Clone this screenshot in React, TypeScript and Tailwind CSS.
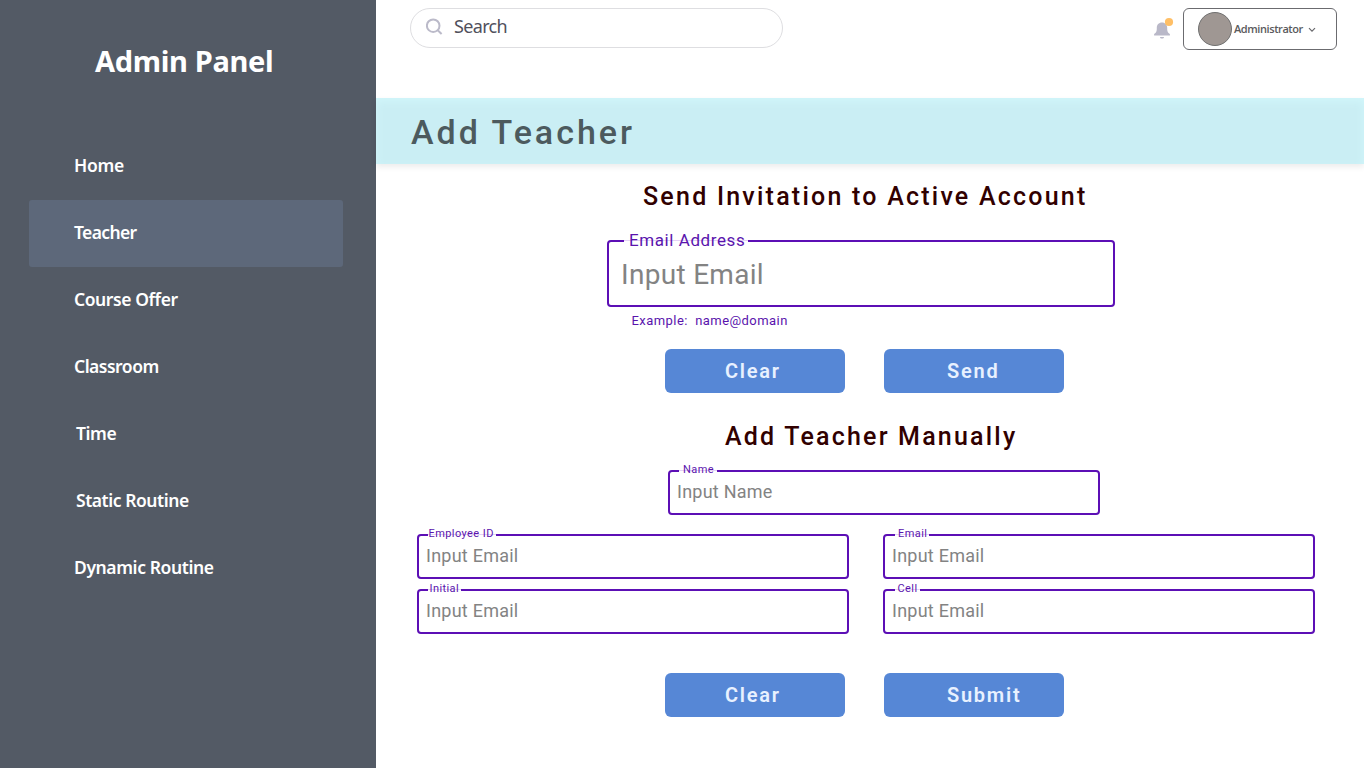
import React from "react";

const navItems = [
  { label: "Home", pad: "pl-[45px]", spacing: "tracking-[-0.3px]" },
  { label: "Teacher", pad: "pl-[45px]", spacing: "tracking-[-0.65px]", active: true },
  { label: "Course Offer", pad: "pl-[45px]", spacing: "tracking-[-0.42px]" },
  { label: "Classroom", pad: "pl-[45px]", spacing: "tracking-[-0.5px]" },
  { label: "Time", pad: "pl-[47px]", spacing: "tracking-[-0.4px]" },
  { label: "Static Routine", pad: "pl-[47px]", spacing: "tracking-[-0.45px]" },
  { label: "Dynamic Routine", pad: "pl-[45px]", spacing: "tracking-[-0.4px]" },
];

function Sidebar() {
  return (
    <aside className="w-[376px] shrink-0 bg-[#535a65] px-[29px] text-white font-['Noto_Sans',sans-serif]">
      <h1 className="flex h-[133px] items-start pl-[66px] pt-[41px] text-[29px] leading-[40px] font-bold tracking-[-0.32px] whitespace-nowrap">
        Admin Panel
      </h1>
      <nav className="flex w-[314px] flex-col">
        {navItems.map((item) => (
          <a
            key={item.label}
            className={`flex h-[67px] items-center rounded-[3px] pb-[3px] text-[17.5px] font-semibold ${item.pad} ${item.spacing} ${item.active ? "bg-[#5d687a]" : ""}`}
          >
            {item.label}
          </a>
        ))}
      </nav>
    </aside>
  );
}

function TopBar() {
  return (
    <header className="flex h-[98px] items-start pt-2 pl-[34px] pr-[27px]">
      <div className="flex h-10 w-[373px] items-center rounded-full border border-[#dedee1] pl-[15px]">
        <svg width="17" height="17" viewBox="0 0 17 17" fill="none" stroke="#bbbac9" strokeWidth="2" className="-mt-[3px]">
          <circle cx="7.2" cy="7.7" r="6.3" />
          <path d="M11.7 12.2 15.6 16" />
        </svg>
        <span className="-mt-[3px] ml-[11px] text-[18px] tracking-[-0.65px] text-[#50505c] font-['Noto_Sans',sans-serif]">Search</span>
      </div>
      <svg width="22" height="24" viewBox="0 0 22 24" className="mt-[8px] ml-auto mr-[8px]">
        <path d="M9 6.6c3.3 0 5.2 2.4 5.2 5.3 0 3.6.5 4.6 2.7 6.2v1.5H1.1v-1.5c2.2-1.6 2.7-2.6 2.7-6.200C3.8 9 5.7 6.600 9 6.600z" fill="#b9b8c8" />
        <path d="M7 21h4c0 .9-.9 1.600-2 1.600s-2-.7-2-1.600z" fill="#b9b8c8" />
        <circle cx="16" cy="6" r="4.1" fill="#ffbf66" />
      </svg>
      <button className="flex h-[42px] w-[154px] items-center rounded-[6px] border border-[#6b6b6f] pl-[14px]">
        <span className="size-[34px] shrink-0 rounded-full border border-[#707070] bg-[#9f9793]" />
        <span className="ml-[2px] w-[70px] text-left text-[11px] font-semibold tracking-[-0.42px] text-[#5a5a5c] font-['Open_Sans',sans-serif]">Administrator</span>
        <svg width="8" height="6" viewBox="0 0 8 6" fill="none" stroke="#68686c" strokeWidth="1.2" className="mt-px ml-[4px]">
          <path d="M1 1.2 4 4.2 7 1.2" />
        </svg>
      </button>
    </header>
  );
}

type FieldProps = {
  label: string;
  placeholder: string;
  notch: string;
  large?: boolean;
  className?: string;
};

function Field({ label, placeholder, notch, large, className = "" }: FieldProps) {
  return (
    <div
      className={`relative flex items-center rounded-[4px] border-2 border-[#5c0fb5] ${large ? "h-[67px] w-[508px] pt-[2px] pl-[12px]" : "h-[45px] w-[432px] pb-[2px] pl-[7px]"} ${className}`}
    >
      <span
        className={`absolute -top-[2px] flex h-[2px] items-center border-t border-[#e5d2f6] bg-white whitespace-nowrap text-[#5a14ad] ${large ? "text-[17px] tracking-[0.58px]" : "text-[11px] tracking-[0.42px]"} ${notch}`}
      >
        <span className={large ? "-mt-px" : "-mt-[3px]"}>{label}</span>
      </span>
      <span
        className={`text-[#838383] ${large ? "text-[28px] tracking-[0.3px]" : "-mt-px text-[18px] tracking-[0.24px]"}`}
      >
        {placeholder}
      </span>
    </div>
  );
}

function Actions({ submit, className }: { submit: string; className: string }) {
  const base =
    "flex h-[44px] w-[180px] items-center rounded-[6px] bg-[#5687d6] text-[20px] font-semibold tracking-[1.75px] text-[#e8f1ff]";
  return (
    <div className={`flex gap-[39px] pl-[289px] ${className}`}>
      <button className={`${base} pl-[60px]`}>Clear</button>
      <button className={`${base} pl-[63px]`}>{submit}</button>
    </div>
  );
}

export default function App() {
  return (
    <div className="flex h-[768px] w-[1364px] overflow-hidden bg-white">
      <Sidebar />
      <main className="min-w-0 flex-1 font-['Roboto',sans-serif]">
        <TopBar />
        <div className="flex h-[66px] items-center bg-[#caeef4] pl-[35px] pt-[2px] shadow-[0_3px_6px_rgba(0,0,0,0.08),inset_0_3px_8px_#d2f7fb]">
          <h2 className="text-[34px] font-medium tracking-[3px] text-[#4c5a5e]">Add Teacher</h2>
        </div>
        <h3 className="mt-[15px] h-9 pl-[267px] text-[25px] leading-[36px] font-medium tracking-[2.23px] whitespace-nowrap text-[#310000]">
          Send Invitation to Active Account
        </h3>
        <Field large label="Email Address" placeholder="Input Email" notch="left-[15px] w-[124px] pl-[5px]" className="mt-[25px] ml-[231px]" />
        <p className="h-7 pl-[255.5px] text-[13px] leading-[28px] tracking-[0.44px] whitespace-pre text-[#5a14ad]">Example:  name@domain</p>
        <Actions submit="Send" className="mt-[14px]" />
        <h3 className="mt-[26px] h-9 pl-[349px] text-[25px] leading-[36px] font-medium tracking-[2.2px] text-[#310000]">
          Add Teacher Manually
        </h3>
        <Field label="Name" placeholder="Input Name" notch="left-[9px] w-[38px] pl-[4px]" className="mt-[15px] ml-[292px]" />
        <div className="mt-[19px] grid grid-cols-[432px_432px] gap-x-[34px] gap-y-[10px] pl-[41px]">
          <Field label="Employee ID" placeholder="Input Email" notch="left-[9px] w-[68px] pl-[0.5px]" />
          <Field label="Email" placeholder="Input Email" notch="left-[10px] w-[34px] pl-[3px]" />
          <Field label="Initial" placeholder="Input Email" notch="left-[9px] w-[33px] pl-[1.5px]" />
          <Field label="Cell" placeholder="Input Email" notch="left-[10px] w-[25px] pl-[2.5px]" />
        </div>
        <Actions submit="Submit" className="mt-[39px]" />
      </main>
    </div>
  );
}
